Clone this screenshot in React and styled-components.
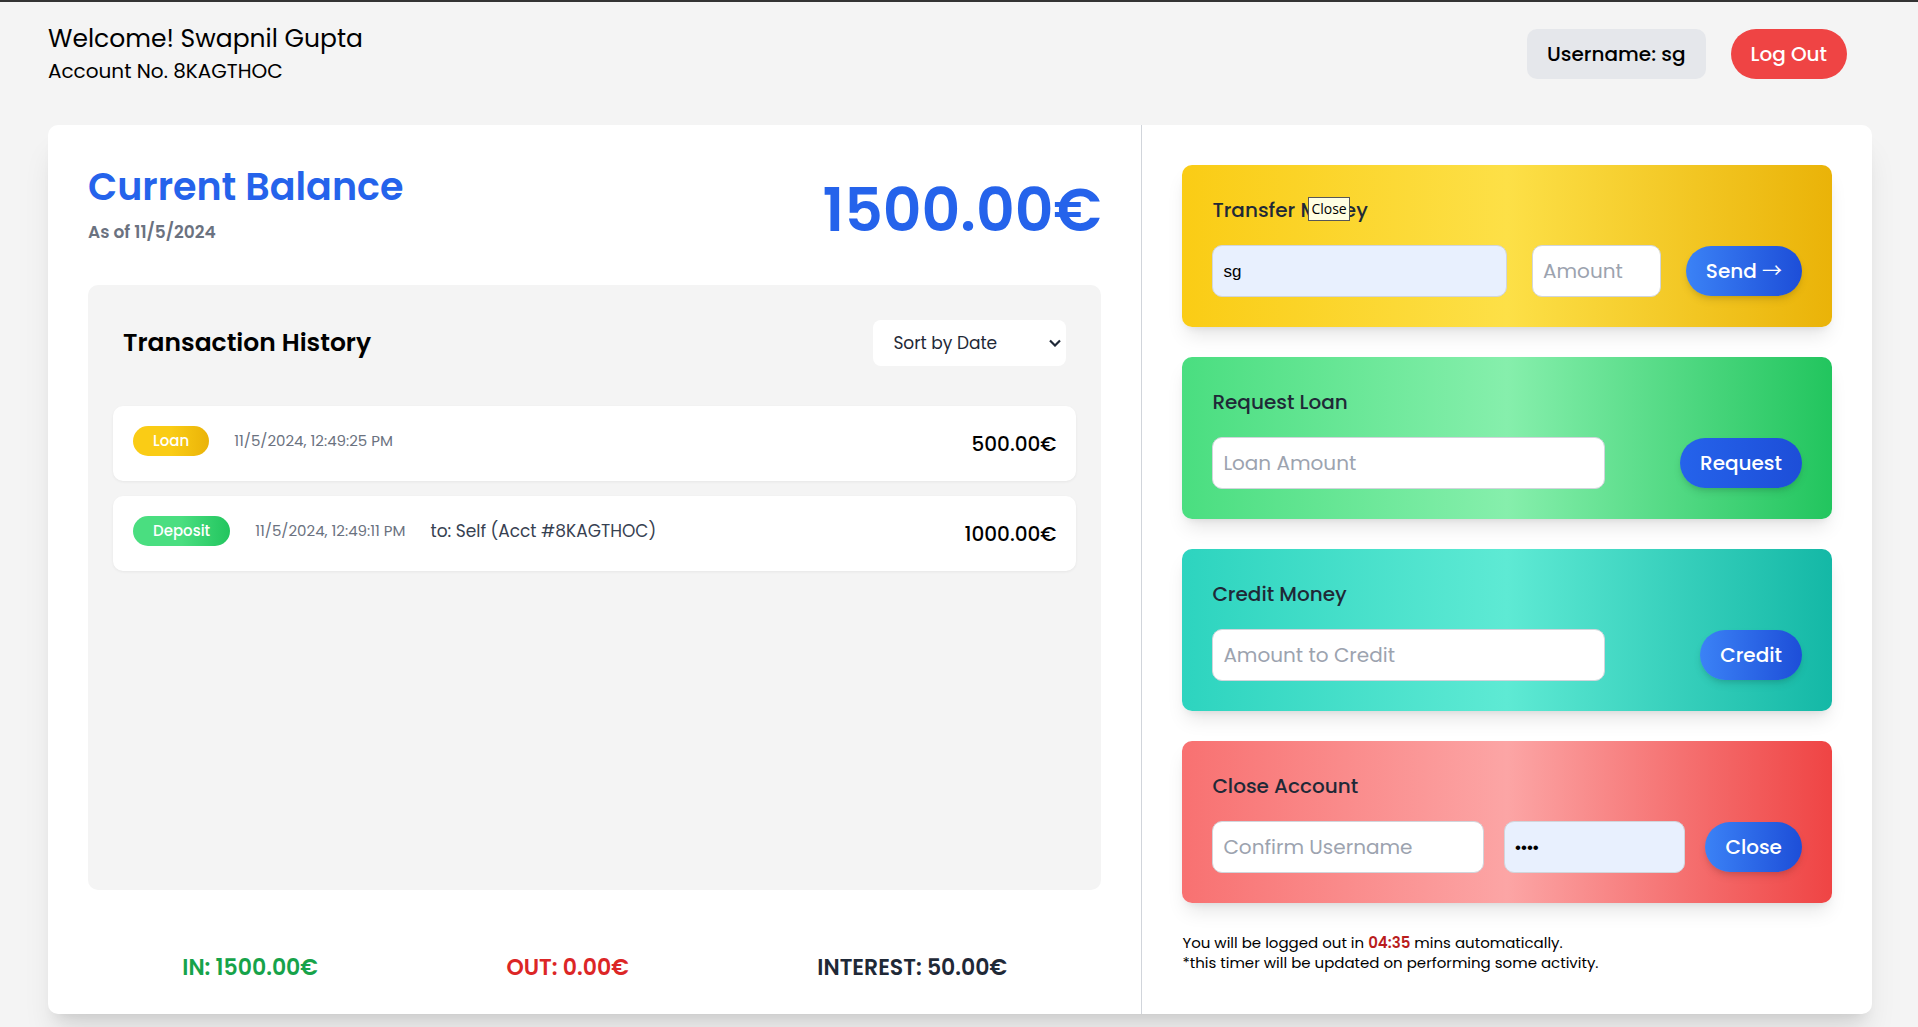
import React, { useState } from "react";
import styled, { createGlobalStyle } from "styled-components";

const GlobalStyle = createGlobalStyle`
  *, *::before, *::after { box-sizing: border-box; }
  body {
    margin: 0;
    background: #f4f4f4;
    color: #000;
    font-family: Poppins, Inter, "Liberation Sans", sans-serif;
    font-size: 20px;
    line-height: 30px;
  }
  h1, h2, h3, p, ul { margin: 0; padding: 0; font-weight: 400; }
  button, input, select { font-family: inherit; margin: 0; }
`;

const Page = styled.div`
  border-top: 2px solid #333;
  padding: 0 46px 13px 48px;
  overflow: hidden;
`;

const Header = styled.header`
  display: flex;
  justify-content: space-between;
  align-items: center;
  padding: 19px 25px 39px 0;
`;

const Welcome = styled.h1`
  font-size: 25px;
  line-height: 35px;
`;

const Account = styled.p`
  font-size: 20px;
  line-height: 30px;
`;

const Actions = styled.div`
  display: flex;
  gap: 25px;
`;

const UserTag = styled.div`
  padding: 10px 20px;
  border-radius: 10px;
  background: #e5e7eb;
  font-weight: 500;
`;

const Pill = styled.button`
  height: 50px;
  padding: 0 20px;
  border: 0;
  border-radius: 25px;
  background: ${(p) => p.$background};
  box-shadow: ${(p) => (p.$raised ? "0 5px 8px -1px rgba(0,0,0,.1), 0 3px 5px -2px rgba(0,0,0,.1)" : "none")};
  color: #fff;
  font-size: 20px;
  font-weight: 500;
  line-height: 30px;
  white-space: nowrap;
  cursor: pointer;
`;

const Arrow = styled.span`
  font-family: "Noto Sans CJK JP", sans-serif;
  font-weight: 400;
  line-height: 20px;
`;

const Main = styled.main`
  display: grid;
  grid-template-columns: 3fr 2fr;
  border-radius: 10px;
  background: #fff;
  box-shadow: 0 25px 31px -6px rgba(0, 0, 0, 0.1), 0 10px 13px -8px rgba(0, 0, 0, 0.1);
`;

const Overview = styled.section`
  display: flex;
  flex-direction: column;
  min-width: 0;
  padding: 40px 40px 29px;
  border-right: 1px solid #d1d5db;
`;

const BalanceRow = styled.div`
  display: flex;
  justify-content: space-between;
  align-items: flex-start;
  height: 90px;
  margin-bottom: 30px;
`;

const BalanceTitle = styled.h2`
  color: #2563eb;
  font-size: 38px;
  font-weight: 600;
  line-height: 44px;
`;

const BalanceDate = styled.p`
  padding-top: 8px;
  color: #6b7280;
  font-size: 17px;
  font-weight: 600;
`;

const Balance = styled.p`
  color: #2563eb;
  font-size: 60px;
  font-weight: 600;
  line-height: 90px;
`;

const History = styled.section`
  flex: 1;
  padding: 35px 25px;
  border-radius: 10px;
  background: #f4f4f4;
`;

const HistoryHeader = styled.div`
  display: flex;
  justify-content: space-between;
  align-items: center;
  margin-bottom: 40px;
  padding: 0 10px;
`;

const HistoryTitle = styled.h2`
  font-size: 25px;
  font-weight: 600;
  line-height: 46px;
`;

const SortBox = styled.div`
  display: grid;
  align-items: center;
  width: 193px;
  color: #1f2937;

  > * { grid-area: 1 / 1; }
  > svg { justify-self: end; margin-right: 5px; pointer-events: none; }
`;

const SortSelect = styled.select`
  appearance: none;
  width: 100%;
  height: 46px;
  padding: 0 20px;
  border: 0;
  border-radius: 8px;
  background: #fff;
  color: inherit;
  font-size: 17px;
`;

const Movements = styled.ul`
  display: flex;
  flex-direction: column;
  gap: 15px;
  list-style: none;
`;

const Movement = styled.li`
  display: flex;
  align-items: flex-start;
  gap: 25px;
  height: 75px;
  padding: 20px;
  border-radius: 10px;
  background: #fff;
  box-shadow: 0 1px 3px rgba(0, 0, 0, 0.06);
`;

const Badge = styled.span`
  padding: 0 20px;
  border-radius: 15px;
  background: linear-gradient(to right, ${(p) => p.$from} 50%, ${(p) => p.$to});
  color: #fff;
  font-size: 15px;
  font-weight: 500;
`;

const Time = styled.time`
  color: #6b7280;
  font-size: 15px;
`;

const Party = styled.span`
  color: #374151;
  font-size: 17px;
`;

const Amount = styled.span`
  margin-left: auto;
  font-weight: 500;
  line-height: 36px;
`;

const Summary = styled.div`
  display: flex;
  justify-content: space-around;
  padding-top: 60px;
`;

const SummaryItem = styled.p`
  color: ${(p) => p.$color};
  font-size: 22px;
  font-weight: 600;
  line-height: 35px;
`;

const Operations = styled.section`
  display: flex;
  flex-direction: column;
  gap: 30px;
  min-width: 0;
  padding: 40px 40px 41px;
`;

const Operation = styled.form`
  display: flex;
  flex-direction: column;
  gap: 20px;
  padding: 30px;
  border-radius: 10px;
  background: linear-gradient(to right, ${(p) => p.$colors});
  box-shadow: 0 12px 19px -4px rgba(0, 0, 0, 0.1), 0 5px 8px -5px rgba(0, 0, 0, 0.1);
`;

const OperationTitle = styled.h3`
  position: relative;
  align-self: flex-start;
  color: #1f2937;
  font-size: 20px;
  font-weight: 500;
`;

const Tooltip = styled.span`
  position: absolute;
  top: 2px;
  left: 96px;
  padding: 0 2px;
  border: 1px solid #575757;
  background: #ffffe1;
  color: #000;
  font-family: "Open Sans", "Noto Sans", sans-serif;
  font-size: 14px;
  font-weight: 400;
  line-height: 22px;
`;

const Fields = styled.div`
  display: flex;
  justify-content: space-between;
  align-items: center;
`;

const Field = styled.input`
  width: ${(p) => p.$width};
  height: 52px;
  padding: ${(p) => (p.$filled ? "2px 10px 0" : "0 10px")};
  border: 1px solid #d1d5db;
  border-radius: 10px;
  background: ${(p) => (p.$filled ? "#e8f0fe" : "#fff")};
  color: #000;
  font-family: ${(p) => (p.$filled ? '"Liberation Sans", Arial, sans-serif' : "inherit")};
  font-size: ${(p) => (p.$filled ? "17px" : "20px")};
  &::placeholder { color: #9ca3af; opacity: 1; }
`;

const Timer = styled.p`
  font-size: 15px;
  line-height: 20px;
  strong { color: #b91c1c; font-weight: 600; }
`;

const BLUE = "linear-gradient(to right, #3b82f6, #1d4ed8)";

const movements = [
  { type: "Loan", time: "11/5/2024, 12:49:25 PM", amount: "500.00€", from: "#facc15", to: "#eab308" },
  { type: "Deposit", time: "11/5/2024, 12:49:11 PM", party: "to: Self (Acct #8KAGTHOC)", amount: "1000.00€", from: "#4ade80", to: "#22c55e" },
];

const operations = [
  {
    title: "Transfer Money",
    tooltip: "Close",
    colors: "#facc15, #fde047, #eab308",
    action: <>Send <Arrow>→</Arrow></>,
    fields: [
      { label: "Recipient", width: "50%", value: "sg" },
      { label: "Amount", width: "129px" },
    ],
  },
  {
    title: "Request Loan",
    colors: "#4ade80, #86efac, #22c55e",
    action: "Request",
    background: "linear-gradient(to right, #2563eb, #1d4ed8)",
    fields: [{ label: "Loan Amount", width: "66.6%" }],
  },
  {
    title: "Credit Money",
    colors: "#2dd4bf, #5eead4, #14b8a6",
    action: "Credit",
    fields: [{ label: "Amount to Credit", width: "66.6%" }],
  },
  {
    title: "Close Account",
    colors: "#f87171, #fca5a5, #ef4444",
    action: "Close",
    fields: [
      { label: "Confirm Username", width: "46%" },
      { label: "Password", width: "181px", type: "password", value: "1234" },
    ],
  },
];

export default function App() {
  const [sort, setSort] = useState("date");
  return (
    <Page>
      <GlobalStyle />
      <Header>
        <div>
          <Welcome>Welcome! Swapnil Gupta</Welcome>
          <Account>Account No. 8KAGTHOC</Account>
        </div>
        <Actions>
          <UserTag>Username: sg</UserTag>
          <Pill type="button" $background="#ef4444">Log Out</Pill>
        </Actions>
      </Header>
      <Main>
        <Overview>
          <BalanceRow>
            <div>
              <BalanceTitle>Current Balance</BalanceTitle>
              <BalanceDate>As of 11/5/2024</BalanceDate>
            </div>
            <Balance>1500.00€</Balance>
          </BalanceRow>
          <History>
            <HistoryHeader>
              <HistoryTitle>Transaction History</HistoryTitle>
              <SortBox>
                <SortSelect aria-label="Sort transactions" value={sort} onChange={(e) => setSort(e.target.value)}>
                  <option value="date">Sort by Date</option>
                  <option value="amount">Sort by Amount</option>
                </SortSelect>
                <svg width="12" height="8" viewBox="0 0 12 8" fill="none" stroke="currentColor" strokeWidth="2.2" aria-hidden="true">
                  <path d="M1 1.5 6 6.5 11 1.5" />
                </svg>
              </SortBox>
            </HistoryHeader>
            <Movements>
              {movements.map((m) => (
                <Movement key={m.time}>
                  <Badge $from={m.from} $to={m.to}>{m.type}</Badge>
                  <Time>{m.time}</Time>
                  {m.party && <Party>{m.party}</Party>}
                  <Amount>{m.amount}</Amount>
                </Movement>
              ))}
            </Movements>
          </History>
          <Summary>
            <SummaryItem $color="#16a34a">IN: 1500.00€</SummaryItem>
            <SummaryItem $color="#dc2626">OUT: 0.00€</SummaryItem>
            <SummaryItem $color="#1f2937">INTEREST: 50.00€</SummaryItem>
          </Summary>
        </Overview>
        <Operations>
          {operations.map((op) => (
            <Operation key={op.title} $colors={op.colors} onSubmit={(e) => e.preventDefault()}>
              <OperationTitle>
                {op.title}
                {op.tooltip && <Tooltip role="tooltip">{op.tooltip}</Tooltip>}
              </OperationTitle>
              <Fields>
                {op.fields.map((f) => (
                  <Field
                    key={f.label}
                    type={f.type || "text"}
                    aria-label={f.label}
                    placeholder={f.label}
                    defaultValue={f.value}
                    $width={f.width}
                    $filled={Boolean(f.value)}
                  />
                ))}
                <Pill $raised $background={op.background || BLUE}>{op.action}</Pill>
              </Fields>
            </Operation>
          ))}
          <Timer>
            You will be logged out in <strong>04:35</strong> mins automatically.
            <br />
            *this timer will be updated on performing some activity.
          </Timer>
        </Operations>
      </Main>
    </Page>
  );
}
